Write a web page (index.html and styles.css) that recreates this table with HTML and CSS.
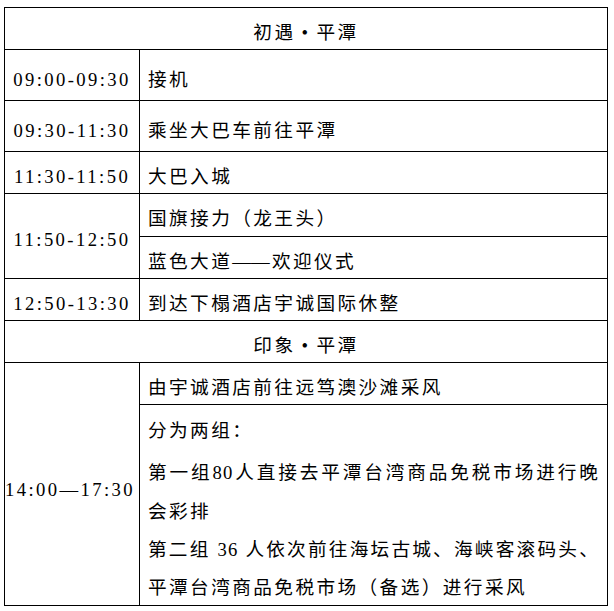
FILE: index.html
```html
<!DOCTYPE html>
<html lang="zh-CN">
<head>
<meta charset="utf-8">
<link rel="stylesheet" href="styles.css">
</head>
<body>
<table class="schedule">
  <colgroup><col class="c-time"><col class="c-act"></colgroup>
  <tr class="h42"><td class="head" colspan="2">初遇<span class="dot">•</span>平潭</td></tr>
  <tr class="h51"><td class="time tall">09:00-09:30</td><td class="act tall">接机</td></tr>
  <tr class="h51"><td class="time tall">09:30-11:30</td><td class="act tall">乘坐大巴车前往平潭</td></tr>
  <tr class="h42"><td class="time">11:30-11:50</td><td class="act">大巴入城</td></tr>
  <tr class="h43"><td class="time" rowspan="2">11:50-12:50</td><td class="act">国旗接力（龙王头）</td></tr>
  <tr class="h42"><td class="act">蓝色大道<span class="tight">—</span>—欢迎仪式</td></tr>
  <tr class="h42"><td class="time">12:50-13:30</td><td class="act">到达下榻酒店宇诚国际休整</td></tr>
  <tr class="h42"><td class="head" colspan="2">印象<span class="dot">•</span>平潭</td></tr>
  <tr class="h42"><td class="time long" rowspan="2">14:00—17:30</td><td class="act">由宇诚酒店前往远笃澳沙滩采风</td></tr>
  <tr class="h201"><td class="act multi">
    <div class="para first">分为两组：</div>
    <div class="line full">第一组80人直接去平潭台湾商品免税市场进行晚</div>
    <div class="line">会彩排</div>
    <div class="line full">第二组 36 人依次前往海坛古城、海峡客滚码头、</div>
    <div class="line last">平潭台湾商品免税市场（备选）进行采风</div>
  </td></tr>
</table>
</body>
</html>
```
FILE: styles.css
```css
html, body {
  margin: 0;
  padding: 0;
  background: #ffffff;
}
body {
  font-family: "Liberation Serif", "Noto Sans CJK SC", serif;
  font-size: 18.67px;
  letter-spacing: 2.4px;
  color: #000000;
}
.schedule {
  border-collapse: collapse;
  table-layout: fixed;
  width: 603px;
  margin: 7px 0 0 4px;
}
.c-time { width: 135px; }
.c-act { width: 468px; }
.schedule td {
  border: 1px solid #000000;
  line-height: 24px;
  padding: 8px 8px 0 8px;
  vertical-align: middle;
  white-space: nowrap;
}
.h42 { height: 42px; }
.h43 { height: 43px; }
.h51 { height: 51px; }
.h201 { height: 201px; }
.schedule td.tall { padding-top: 10px; }
.schedule td.head { text-align: center; }
.schedule td.time {
  text-align: center;
  padding-left: 0;
  padding-right: 0;
}
.schedule td.long { padding-top: 11px; text-align: left; padding-left: 0; }
.schedule td.act { padding-left: 8px; }
.dot {
  display: inline-block;
  width: 1em;
  text-align: center;
  letter-spacing: 0;
  margin-right: 2.4px;
}
.tight { letter-spacing: 0; }
.schedule td.multi {
  vertical-align: top;
  padding-top: 7px;
  line-height: 38.3px;
}
.para.first { margin-bottom: 4px; }
.line.last { margin-bottom: -4px; }
.line.full {
  letter-spacing: 1.2px;
  text-align: justify;
  text-align-last: justify;
  white-space: normal;
}
```
